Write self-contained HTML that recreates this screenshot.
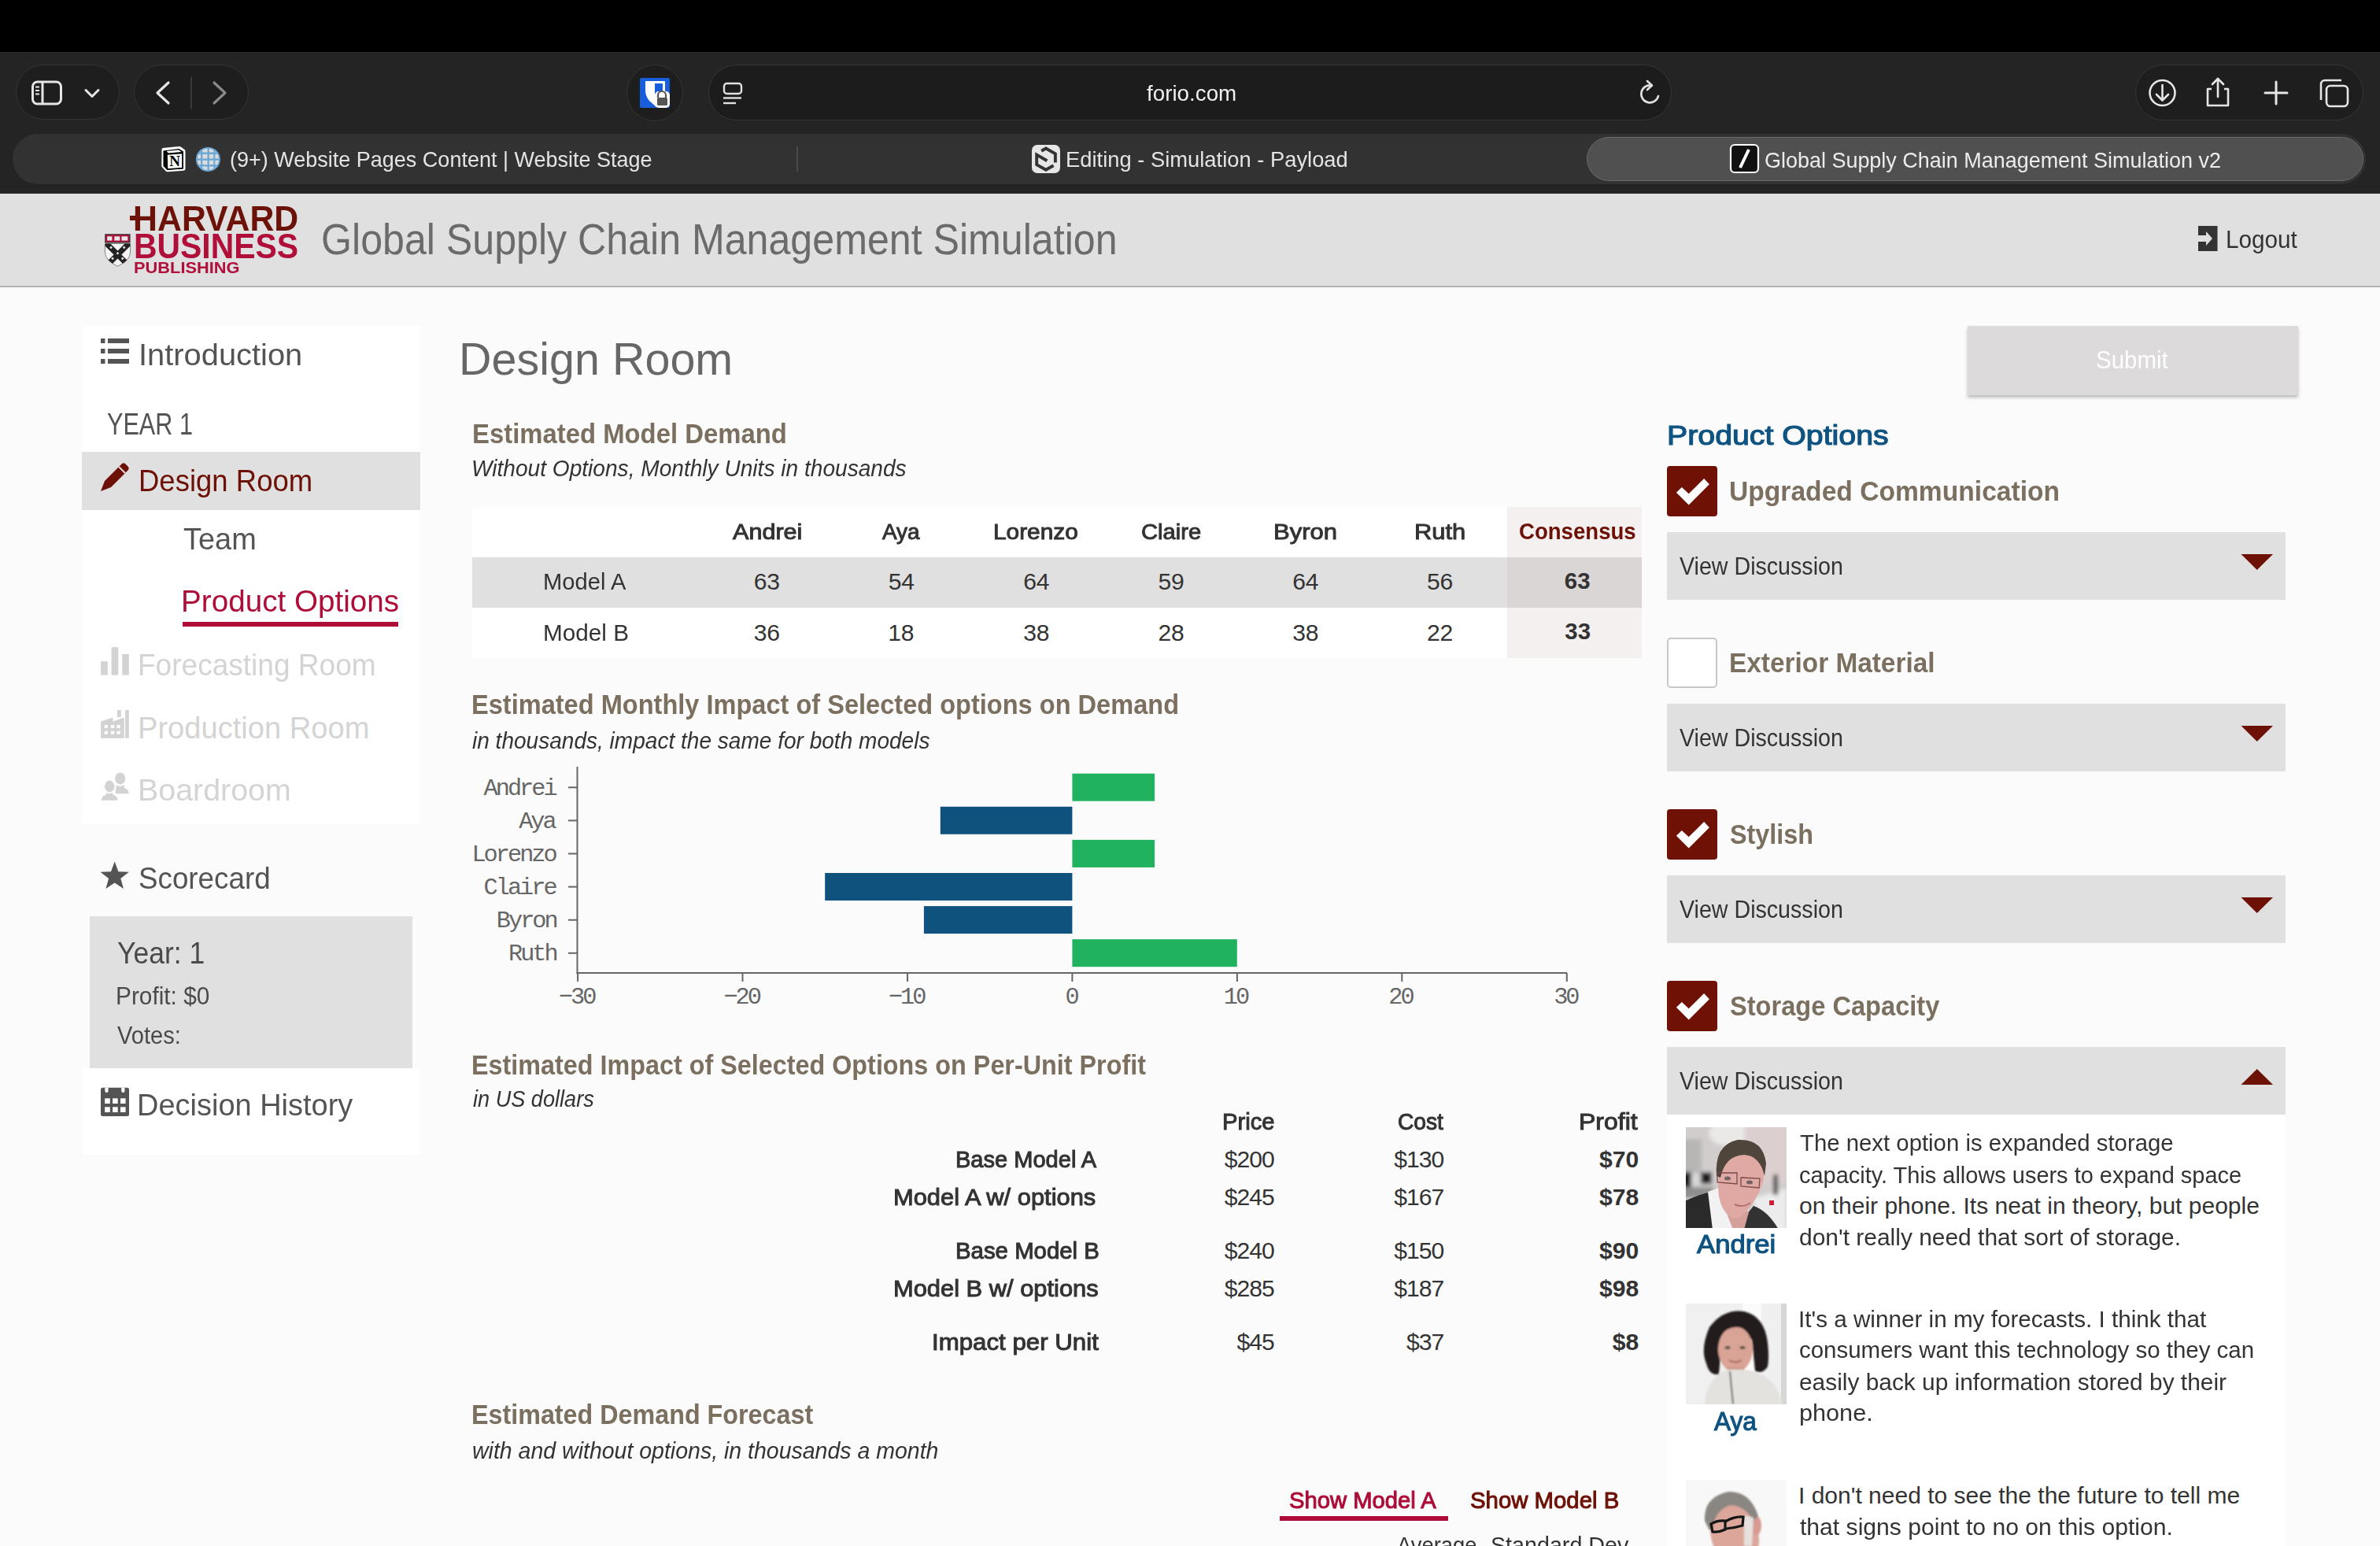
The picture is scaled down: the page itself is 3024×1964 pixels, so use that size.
<!DOCTYPE html>
<html><head><meta charset="utf-8"><title>Design Room</title>
<style>
html,body{margin:0;padding:0;width:3024px;height:1964px;overflow:hidden;background:#fbfbfb;}
body{position:relative;font-family:'Liberation Sans', sans-serif;}
.t{position:absolute;white-space:pre;line-height:1;}
svg{position:absolute;overflow:visible;}
</style></head><body>
<div style="position:absolute;left:0px;top:0px;width:3024px;height:66px;background:#000;"></div>
<div style="position:absolute;left:0px;top:66px;width:3024px;height:180px;background:#242424;"></div>
<div style="position:absolute;left:20px;top:82px;width:132px;height:70px;border-radius:35px;background:#1e1e1e;border:1px solid #353535;box-sizing:border-box"></div>
<svg style="left:0;top:0" width="3024" height="246"><rect x="41.5" y="104" width="36" height="28" rx="6" fill="none" stroke="#e6e6e6" stroke-width="3"/><line x1="54" y1="104" x2="54" y2="132" stroke="#e6e6e6" stroke-width="3"/><line x1="45" y1="110.5" x2="50" y2="110.5" stroke="#e6e6e6" stroke-width="2"/><line x1="45" y1="115" x2="50" y2="115" stroke="#e6e6e6" stroke-width="2"/><line x1="45" y1="119.5" x2="50" y2="119.5" stroke="#e6e6e6" stroke-width="2"/><polyline points="109,114.5 117,122.5 125,114.5" fill="none" stroke="#e6e6e6" stroke-width="3" stroke-linecap="round" stroke-linejoin="round"/></svg>
<div style="position:absolute;left:170px;top:82px;width:146px;height:70px;border-radius:35px;background:#1e1e1e;border:1px solid #353535;box-sizing:border-box"></div>
<svg style="left:0;top:0" width="3024" height="246"><polyline points="214,105 200,118 214,131" fill="none" stroke="#e6e6e6" stroke-width="3.2" stroke-linecap="round" stroke-linejoin="round"/><line x1="243" y1="98" x2="243" y2="138" stroke="#444" stroke-width="1.5"/><polyline points="272,105 286,118 272,131" fill="none" stroke="#8a8a8a" stroke-width="3.2" stroke-linecap="round" stroke-linejoin="round"/></svg>
<div style="position:absolute;left:796px;top:82px;width:72px;height:72px;border-radius:36px;background:#1e1e1e;border:1px solid #353535;box-sizing:border-box"></div>
<svg style="left:0;top:0" width="3024" height="246"><rect x="813" y="99" width="38" height="38" rx="2" fill="#175ddc"/><path d="M820 103 H845 V123 L834 136 L825 128 Q820 122 820 115 Z" fill="#fff"/><rect x="832" y="106" width="10" height="14" fill="#175ddc"/><rect x="832" y="116" width="19" height="21" rx="5" fill="#fff"/><path d="M836 124 v-3 a5 5 0 0 1 10 0 v3" fill="none" stroke="#555" stroke-width="2.2"/><rect x="835" y="124" width="13" height="10" rx="1.5" fill="#555"/></svg>
<div style="position:absolute;left:900px;top:82px;width:1224px;height:71px;border-radius:36px;background:#1c1c1c;border:1px solid #363636;box-sizing:border-box"></div>
<svg style="left:0;top:0" width="3024" height="246"><rect x="920" y="106" width="22" height="13" rx="3.5" fill="none" stroke="#e0e0e0" stroke-width="2.4"/><line x1="919" y1="124.5" x2="942" y2="124.5" stroke="#e0e0e0" stroke-width="2.4"/><line x1="919" y1="131" x2="935" y2="131" stroke="#e0e0e0" stroke-width="2.4"/><path d="M2107 122 A11 11 0 1 1 2098 108.5" fill="none" stroke="#e0e0e0" stroke-width="2.6" stroke-linecap="round"/><polyline points="2093,103 2099,108.5 2093,114" fill="none" stroke="#e0e0e0" stroke-width="2.6" stroke-linecap="round" stroke-linejoin="round"/></svg>
<div style="position:absolute;left:2713px;top:82px;width:290px;height:71px;border-radius:36px;background:#1e1e1e;border:1px solid #353535;box-sizing:border-box"></div>
<svg style="left:0;top:0" width="3024" height="246"><circle cx="2747.5" cy="118" r="16" fill="none" stroke="#e6e6e6" stroke-width="2.6"/><line x1="2747.5" y1="108" x2="2747.5" y2="127" stroke="#e6e6e6" stroke-width="2.6" stroke-linecap="round"/><polyline points="2740,120 2747.5,127.5 2755,120" fill="none" stroke="#e6e6e6" stroke-width="2.6" stroke-linecap="round" stroke-linejoin="round"/><path d="M2810 113 H2805 V134 H2831 V113 H2826" fill="none" stroke="#e6e6e6" stroke-width="2.6" stroke-linejoin="round"/><line x1="2818" y1="100" x2="2818" y2="123" stroke="#e6e6e6" stroke-width="2.6" stroke-linecap="round"/><polyline points="2811,107 2818,100 2825,107" fill="none" stroke="#e6e6e6" stroke-width="2.6" stroke-linecap="round" stroke-linejoin="round"/><line x1="2878" y1="118" x2="2906" y2="118" stroke="#e6e6e6" stroke-width="3" stroke-linecap="round"/><line x1="2892" y1="104" x2="2892" y2="132" stroke="#e6e6e6" stroke-width="3" stroke-linecap="round"/><rect x="2956" y="109" width="27" height="26" rx="5" fill="none" stroke="#e6e6e6" stroke-width="2.6"/><path d="M2949 127 V107 a5 5 0 0 1 5 -5 H2975" fill="none" stroke="#e6e6e6" stroke-width="2.6"/></svg>
<div style="position:absolute;left:16px;top:170px;width:2990px;height:64px;border-radius:32px;background:#323232"></div>
<div style="position:absolute;left:1012px;top:186px;width:2px;height:32px;background:#4a4a4a;"></div>
<div style="position:absolute;left:2016px;top:174px;width:987px;height:56px;border-radius:28px;background:#505050;border:1.5px solid #6a6a6a;box-sizing:border-box"></div>
<svg style="left:0;top:0" width="3024" height="246"><path d="M205.5 190.5 Q205 188.5 207 188 L227.5 186 Q229 186 230.5 187 L235 190.5 Q235.5 191.5 235.5 193 V214.5 Q235.5 216.5 233.5 216.8 L213 218.2 Q211.5 218.3 210.5 217.3 L206 212.5 Q205.3 211.6 205.3 210.5 Z" fill="#fff"/><path d="M207.5 191.5 L227.5 189 L233 192.5 V214.5 L212.5 216 L207.5 211 Z" fill="#000"/><path d="M211.5 192 L227 190.5 L230.5 193 L214 194.5 Z" fill="#fff"/><path d="M212 196 L232 194.5 V213.5 L212.5 215 Z" fill="#fff" stroke="#000" stroke-width="1.6"/><text x="222" y="211.2" text-anchor="middle" font-family="Liberation Serif" font-weight="700" font-size="19" fill="#000">N</text><clipPath id="gc"><circle cx="264.4" cy="202.4" r="13.6"/></clipPath><circle cx="264.4" cy="202.4" r="15.5" fill="#6aa6d6"/><g clip-path="url(#gc)" fill="#dcdcdc"><rect x="250" y="186" width="5" height="7.5"/><rect x="257.3" y="186" width="6.2" height="7.5"/><rect x="265.8" y="186" width="5.5" height="7.5"/><rect x="273.4" y="186" width="6" height="7.5"/><rect x="250" y="196" width="5" height="5.4"/><rect x="257.3" y="196" width="6.2" height="5.4"/><rect x="265.8" y="196" width="5.5" height="5.4"/><rect x="273.4" y="196" width="6" height="5.4"/><rect x="250" y="203.8" width="5" height="5.4"/><rect x="257.3" y="203.8" width="6.2" height="5.4"/><rect x="265.8" y="203.8" width="5.5" height="5.4"/><rect x="273.4" y="203.8" width="6" height="5.4"/><rect x="250" y="211.5" width="5" height="8"/><rect x="257.3" y="211.5" width="6.2" height="8"/><rect x="265.8" y="211.5" width="5.5" height="8"/><rect x="273.4" y="211.5" width="6" height="8"/></g><rect x="1311" y="184" width="36" height="36" rx="7" fill="#e6e6e6"/><path d="M1330.4 204.3 L1317.2 196.6 V209.1 L1328.9 215.8 L1338.6 210.2" fill="none" stroke="#333" stroke-width="3.9" stroke-linejoin="miter"/><path d="M1323.2 191.8 L1328.9 188.5 L1340.9 195.4 V206.6" fill="none" stroke="#333" stroke-width="3.9" stroke-linejoin="miter"/><rect x="2199" y="184" width="35" height="35" rx="5" fill="#111" stroke="#fff" stroke-width="2.2"/><line x1="2222" y1="190" x2="2211" y2="213" stroke="#fff" stroke-width="4"/></svg>
<div style="position:absolute;left:0px;top:246px;width:3024px;height:117px;background:#e0e0e0;"></div>
<div style="position:absolute;left:0px;top:363px;width:3024px;height:2px;background:#b5b5b5;"></div>
<div style="position:absolute;left:165px;top:274.4px;width:10px;height:5.900000000000034px;background:#6d1208;"></div>
<svg style="left:0;top:0" width="400" height="400"><rect x="133.2" y="297.2" width="32.4" height="11.4" fill="#3a3a3a"/><rect x="134.4" y="298.4" width="30" height="9" fill="#b00f3a"/><rect x="136.2" y="300.3" width="6.2" height="5.3" fill="#e8e8e8"/><rect x="145.3" y="300.3" width="7" height="5.3" fill="#e8e8e8"/><rect x="154.5" y="300.3" width="7.8" height="5.3" fill="#e8e8e8"/><path d="M133.4 309.5 H165.6 V320 Q165.6 331 149.5 338.3 Q133.4 331 133.4 320 Z" fill="#f4f4f4" stroke="#555" stroke-width="0.7"/><clipPath id="shc"><path d="M133.4 309.5 H165.6 V320 Q165.6 331 149.5 338.3 Q133.4 331 133.4 320 Z"/></clipPath><path d="M135 309 L162 336 M164 309 L137 336" stroke="#222" stroke-width="7" clip-path="url(#shc)"/><g fill="#e6e6e6"><rect x="140" y="313" width="2.6" height="2.6" transform="rotate(45 141.1 314.1)"/><rect x="156.6" y="313" width="2.6" height="2.6" transform="rotate(45 157.7 314.1)"/><rect x="148.4" y="320.4" width="2.6" height="2.6" transform="rotate(45 149.5 321.5)"/><rect x="142" y="327" width="2.6" height="2.6" transform="rotate(45 143.1 328.1)"/><rect x="154.6" y="327" width="2.6" height="2.6" transform="rotate(45 155.7 328.1)"/></g></svg>
<svg style="left:0;top:0" width="3024" height="400"><rect x="2793" y="287" width="24.5" height="32" fill="#333"/><path d="M2793 299 H2803 V294 L2811 303 L2803 312 V307 H2793 Z" fill="#e0e0e0"/></svg>
<div style="position:absolute;left:104px;top:414px;width:430px;height:633px;background:#fff;"></div>
<div style="position:absolute;left:104px;top:574px;width:430px;height:74px;background:#e0e0e0;"></div>
<div style="position:absolute;left:104px;top:1357px;width:430px;height:110px;background:#fff;"></div>
<div style="position:absolute;left:114px;top:1164px;width:410px;height:193px;background:#e0e0e0;"></div>
<svg style="left:0;top:0" width="600" height="1500"><rect x="128" y="430" width="5.5" height="6" fill="#545454"/><rect x="137" y="430" width="27" height="6" fill="#545454"/><rect x="128" y="443" width="5.5" height="6" fill="#545454"/><rect x="137" y="443" width="27" height="6" fill="#545454"/><rect x="128" y="456" width="5.5" height="6" fill="#545454"/><rect x="137" y="456" width="27" height="6" fill="#545454"/><path d="M128 624 L133 611 L155 589 Q157 587.5 159 589 L163 593 Q164.5 595 163 597 L141 619 Z" fill="#6d1006"/><line x1="151" y1="593" x2="159" y2="601" stroke="#e0e0e0" stroke-width="2"/><rect x="128.1" y="840.1" width="8.7" height="17.5" fill="#d3d3d3"/><rect x="141.6" y="822.1" width="8.7" height="35.5" fill="#d3d3d3"/><rect x="155.3" y="831" width="8.5" height="26.6" fill="#d3d3d3"/><path d="M128 937.7 V916.6 L143.5 911.5 V916.6 L157.7 911.5 V937.7 Z" fill="#d3d3d3"/><rect x="148.9" y="902" width="4.9" height="9" fill="#d3d3d3"/><rect x="159.1" y="902" width="4.7" height="35.7" fill="#d3d3d3"/><g fill="#fff"><rect x="132.8" y="921" width="4.2" height="4"/><rect x="140.9" y="921" width="4.3" height="4"/><rect x="148.4" y="921" width="4.3" height="4"/><rect x="132.8" y="928.7" width="4.2" height="4"/><rect x="140.9" y="928.7" width="4.3" height="4"/><rect x="148.4" y="928.7" width="4.3" height="4"/></g><ellipse cx="152.7" cy="989" rx="6.6" ry="7.6" fill="#d3d3d3"/><path d="M146.3 1008.3 L148 997 Q152.7 1001 157.5 997 L158 1001 Q163.8 1003 163.8 1008.3 Z" fill="#d3d3d3"/><ellipse cx="139.2" cy="999" rx="7" ry="8.2" fill="#d3d3d3" stroke="#fff" stroke-width="1.5"/><path d="M128 1017.6 Q128 1011 134 1009 L135.5 1006 Q139.2 1009 143 1006 L144.5 1009 Q150.6 1011 150.6 1017.6 Z" fill="#d3d3d3" stroke="#fff" stroke-width="1.5"/><path d="M145.7 1094.6 L150.4 1107.2 L163.9 1107.7 L153.3 1116 L157 1129 L145.7 1121.5 L134.4 1129 L138.1 1116 L127.5 1107.7 L141 1107.2 Z" fill="#545454"/><rect x="128" y="1381.7" width="36" height="36.3" rx="2.5" fill="#545454"/><path d="M133.4 1381.7 V1386 a2.1 2.1 0 0 0 4.2 0 V1381.7 Z M154.3 1381.7 V1386 a2.1 2.1 0 0 0 4.2 0 V1381.7 Z" fill="#fff"/><rect x="133.2" y="1395.3" width="6.6" height="6.7" fill="#fff"/><rect x="143.1" y="1395.3" width="6.6" height="6.7" fill="#fff"/><rect x="153.0" y="1395.3" width="6.6" height="6.7" fill="#fff"/><rect x="133.2" y="1406.3" width="6.6" height="6.7" fill="#fff"/><rect x="143.1" y="1406.3" width="6.6" height="6.7" fill="#fff"/><rect x="153.0" y="1406.3" width="6.6" height="6.7" fill="#fff"/></svg>
<div style="position:absolute;left:232px;top:790px;width:274px;height:6px;background:#ad0d38;"></div>
<div style="position:absolute;left:600px;top:644px;width:1486px;height:192px;background:#fff;"></div>
<div style="position:absolute;left:600px;top:708px;width:1486px;height:64px;background:#e0e0e0;"></div>
<div style="position:absolute;left:1915px;top:644px;width:171px;height:64px;background:#f3f0ef;"></div>
<div style="position:absolute;left:1915px;top:708px;width:171px;height:64px;background:#d9d6d5;"></div>
<div style="position:absolute;left:1915px;top:772px;width:171px;height:64px;background:#f3f0ef;"></div>
<svg style="left:0;top:0" width="2100" height="1300"><line x1="733.5" y1="974" x2="733.5" y2="1237" stroke="#666" stroke-width="2"/><line x1="732.5" y1="1236" x2="1991" y2="1236" stroke="#666" stroke-width="2"/><line x1="734.1" y1="1236" x2="734.1" y2="1247" stroke="#666" stroke-width="2"/><line x1="943.5" y1="1236" x2="943.5" y2="1247" stroke="#666" stroke-width="2"/><line x1="1153.0" y1="1236" x2="1153.0" y2="1247" stroke="#666" stroke-width="2"/><line x1="1362.4" y1="1236" x2="1362.4" y2="1247" stroke="#666" stroke-width="2"/><line x1="1571.9" y1="1236" x2="1571.9" y2="1247" stroke="#666" stroke-width="2"/><line x1="1781.3" y1="1236" x2="1781.3" y2="1247" stroke="#666" stroke-width="2"/><line x1="1990.8" y1="1236" x2="1990.8" y2="1247" stroke="#666" stroke-width="2"/><line x1="722" y1="1000.3" x2="734" y2="1000.3" stroke="#666" stroke-width="2"/><rect x="1362.4" y="982.7" width="104.7" height="35" fill="#21b25f"/><line x1="722" y1="1042.4" x2="734" y2="1042.4" stroke="#666" stroke-width="2"/><rect x="1194.8" y="1024.8" width="167.6" height="35" fill="#0f527e"/><line x1="722" y1="1084.5" x2="734" y2="1084.5" stroke="#666" stroke-width="2"/><rect x="1362.4" y="1066.9" width="104.7" height="35" fill="#21b25f"/><line x1="722" y1="1126.6" x2="734" y2="1126.6" stroke="#666" stroke-width="2"/><rect x="1048.2" y="1109.0" width="314.2" height="35" fill="#0f527e"/><line x1="722" y1="1168.7" x2="734" y2="1168.7" stroke="#666" stroke-width="2"/><rect x="1173.9" y="1151.1" width="188.5" height="35" fill="#0f527e"/><line x1="722" y1="1210.8" x2="734" y2="1210.8" stroke="#666" stroke-width="2"/><rect x="1362.4" y="1193.2" width="209.4" height="35" fill="#21b25f"/></svg>
<div style="position:absolute;left:1626px;top:1926px;width:214px;height:6px;background:#ad0d38;"></div>
<div style="position:absolute;left:2500px;top:414px;width:420px;height:88px;background:#dcdada;box-shadow:0 3px 4px rgba(0,0,0,0.25)"></div>
<div style="position:absolute;left:2118px;top:592px;width:64px;height:64px;border-radius:4px;background:#701106"></div>
<svg style="left:2118px;top:592px" width="64" height="64"><polygon points="11.9,33.7 18.9,26.9 27.7,35.2 47.1,16.1 53.9,23.3 27.7,49.5" fill="#fff"/></svg>
<div style="position:absolute;left:2118px;top:676px;width:786px;height:86px;background:#e0e0e0;"></div>
<svg style="left:0;top:0" width="3024" height="1964"><polygon points="2847.5,704 2888,704 2867.75,724" fill="#6d1006"/></svg>
<div style="position:absolute;left:2118px;top:810px;width:64px;height:64px;border-radius:5px;background:#fff;border:2px solid #c8c8c8;box-sizing:border-box"></div>
<div style="position:absolute;left:2118px;top:894px;width:786px;height:86px;background:#e0e0e0;"></div>
<svg style="left:0;top:0" width="3024" height="1964"><polygon points="2847.5,922 2888,922 2867.75,942" fill="#6d1006"/></svg>
<div style="position:absolute;left:2118px;top:1028px;width:64px;height:64px;border-radius:4px;background:#701106"></div>
<svg style="left:2118px;top:1028px" width="64" height="64"><polygon points="11.9,33.7 18.9,26.9 27.7,35.2 47.1,16.1 53.9,23.3 27.7,49.5" fill="#fff"/></svg>
<div style="position:absolute;left:2118px;top:1112px;width:786px;height:86px;background:#e0e0e0;"></div>
<svg style="left:0;top:0" width="3024" height="1964"><polygon points="2847.5,1140 2888,1140 2867.75,1160" fill="#6d1006"/></svg>
<div style="position:absolute;left:2118px;top:1246px;width:64px;height:64px;border-radius:4px;background:#701106"></div>
<svg style="left:2118px;top:1246px" width="64" height="64"><polygon points="11.9,33.7 18.9,26.9 27.7,35.2 47.1,16.1 53.9,23.3 27.7,49.5" fill="#fff"/></svg>
<div style="position:absolute;left:2118px;top:1330px;width:786px;height:86px;background:#e0e0e0;"></div>
<svg style="left:0;top:0" width="3024" height="1964"><polygon points="2847.5,1378 2888,1378 2867.75,1358" fill="#6d1006"/></svg>
<div style="position:absolute;left:2118px;top:1416px;width:786px;height:548px;background:#fff;"></div>
<div style="position:absolute;left:2142px;top:1432px;width:128px;height:128px;overflow:hidden;background:#d5d0d0"><svg style="left:0;top:0" width="128" height="128"><defs><filter id="b1" x="-20%" y="-20%" width="140%" height="140%"><feGaussianBlur stdDeviation="2.5"/></filter><filter id="b0"><feGaussianBlur stdDeviation="0.7"/></filter></defs><g filter="url(#b1)"><rect x="-10" y="-10" width="150" height="150" fill="#d2cdcd"/><rect x="-10" y="15" width="30" height="45" fill="#b8b5b5"/><ellipse cx="55" cy="8" rx="26" ry="16" fill="#ebe8e8"/><rect x="75" y="-10" width="60" height="80" fill="#dccfcf"/><rect x="-5" y="57" width="12" height="20" fill="#151515"/><rect x="8" y="58" width="10" height="16" fill="#d8d8d8"/><rect x="19" y="57" width="14" height="15" fill="#1d1d1d"/><rect x="-5" y="76" width="40" height="14" fill="#8e8e8e"/><path d="M86 90 L128 78 V135 H92 Z" fill="#ececec"/><rect x="111" y="60" width="6" height="26" fill="#444"/></g><rect x="106" y="93" width="6" height="6" fill="#c8203a" filter="url(#b0)"/><g filter="url(#b0)"><path d="M-2 94 Q20 84 40 80 L52 130 H-2 Z" fill="#2a2a2a"/><path d="M28 82 L42 77 L66 130 H34 Z" fill="#f2f2f2"/><path d="M62 130 L86 100 Q104 106 118 130 Z" fill="#333"/><path d="M42 84 L60 130 H74 L80 108 Z" fill="#d6a09a"/><path d="M42 60 Q38 95 52 110 Q62 120 72 112 Q92 92 99 66 L99 48 Q86 28 68 30 Q46 32 42 52 Z" fill="#e0a9a3"/><path d="M39 62 Q36 22 66 16 Q98 14 102 46 L100 62 Q94 36 74 35 Q50 36 44 64 Z" fill="#50453b"/><path d="M40 58 L65 58 L65 72 L40 70 Z M70 64 L94 65 L93 77 L70 75 Z" fill="none" stroke="#7a4848" stroke-width="1.3"/><ellipse cx="53" cy="65" rx="4" ry="2.5" fill="#706262"/><ellipse cx="81" cy="70" rx="4" ry="2.5" fill="#706262"/><path d="M62 98 Q72 103 82 96" fill="none" stroke="#b27070" stroke-width="2"/></g></svg></div>
<div style="position:absolute;left:2142px;top:1656px;width:128px;height:128px;overflow:hidden;background:#f0f0f0"><svg style="left:0;top:0" width="128" height="128"><defs><filter id="b2"><feGaussianBlur stdDeviation="1"/></filter></defs><rect x="72" y="0" width="24" height="128" fill="#fbfbfb"/><rect x="121" y="0" width="7" height="128" fill="#d6d6d6"/><g filter="url(#b2)"><path d="M26 76 Q18 58 30 30 Q48 6 74 10 Q100 16 104 50 Q106 68 104 80 Q98 90 88 86 L84 46 Q64 32 46 44 L42 90 Q30 92 26 76 Z" fill="#201b1a"/><ellipse cx="63" cy="58" rx="22" ry="29" fill="#d9a395"/><path d="M42 42 Q60 20 86 38 L86 28 Q60 8 40 30 Z" fill="#201b1a"/><path d="M52 80 L74 80 L76 96 L52 96 Z" fill="#d29c8e"/><path d="M24 130 Q26 94 52 84 L78 84 Q118 92 122 130 Z" fill="#e4e2df"/><path d="M56 86 L60 128" stroke="#666" stroke-width="2"/><ellipse cx="53" cy="56" rx="3.5" ry="2" fill="#554"/><ellipse cx="72" cy="56" rx="3.5" ry="2" fill="#554"/><path d="M55 72 Q63 77 71 72" fill="none" stroke="#a0605a" stroke-width="2"/></g></svg></div>
<div style="position:absolute;left:2142px;top:1880px;width:128px;height:128px;overflow:hidden;background:#f8f8f8"><svg style="left:0;top:0" width="128" height="128"><defs><filter id="b3"><feGaussianBlur stdDeviation="1"/></filter></defs><g filter="url(#b3)"><ellipse cx="62" cy="70" rx="30" ry="40" transform="rotate(-18 62 70)" fill="#dca69a"/><ellipse cx="90" cy="58" rx="6" ry="12" fill="#d99a92"/><path d="M24 52 Q22 22 54 15 Q82 14 92 46 L86 52 Q76 34 58 32 Q38 36 34 62 L30 64 Z" fill="#8a8682"/><path d="M74 45 L86 48 L84 84 L74 84 Z" fill="#e6e0de"/></g><path d="M32 56 Q40 51 50 52 L50 63 Q42 67 34 66 Z" fill="none" stroke="#151515" stroke-width="3.2"/><path d="M50 53 Q62 46 73 47 L72 58 Q62 61 51 62" fill="none" stroke="#151515" stroke-width="3.2"/></svg></div>
<div class="t" style="left:1456.50px;top:104.54px;font-size:28.00px;color:#f0f0f0;transform:scaleX(0.9919);transform-origin:0 0;">forio.com</div>
<div class="t" style="left:292.32px;top:188.76px;font-size:27.50px;color:#e4e4e4;transform:scaleX(0.9818);transform-origin:0 0;">(9+) Website Pages Content | Website Stage</div>
<div class="t" style="left:1354.31px;top:188.76px;font-size:27.50px;color:#e4e4e4;transform:scaleX(0.9946);transform-origin:0 0;">Editing - Simulation - Payload</div>
<div class="t" style="left:2242.02px;top:189.56px;font-size:27.50px;color:#ececec;transform:scaleX(0.9802);transform-origin:0 0;">Global Supply Chain Management Simulation v2</div>
<div class="t" style="left:169.47px;top:256.30px;font-size:44.49px;color:#6d1208;font-weight:700;transform:scaleX(0.9633);transform-origin:0 0;">HARVARD</div>
<div class="t" style="left:169.56px;top:291.00px;font-size:44.49px;color:#b00f3a;font-weight:700;transform:scaleX(0.9189);transform-origin:0 0;">BUSINESS</div>
<div class="t" style="left:170.34px;top:329.61px;font-size:20.58px;color:#b00f3a;font-weight:700;transform:scaleX(1.0600);transform-origin:0 0;">PUBLISHING</div>
<div class="t" style="left:407.90px;top:276.77px;font-size:55.65px;color:#6b6b6b;transform:scaleX(0.9010);transform-origin:0 0;">Global Supply Chain Management Simulation</div>
<div class="t" style="left:2828.05px;top:288.68px;font-size:30.43px;color:#333;transform:scaleX(0.9760);transform-origin:0 0;">Logout</div>
<div class="t" style="left:175.86px;top:431.89px;font-size:38.12px;color:#545454;transform:scaleX(1.0456);transform-origin:0 0;">Introduction</div>
<div class="t" style="left:135.90px;top:519.67px;font-size:38.26px;color:#545454;transform:scaleX(0.8005);transform-origin:0 0;">YEAR 1</div>
<div class="t" style="left:176.43px;top:591.99px;font-size:38.12px;color:#6d1006;transform:scaleX(0.9583);transform-origin:0 0;">Design Room</div>
<div class="t" style="left:232.60px;top:665.79px;font-size:38.12px;color:#545454;transform:scaleX(0.9951);transform-origin:0 0;">Team</div>
<div class="t" style="left:229.56px;top:745.39px;font-size:38.12px;color:#ad0d38;transform:scaleX(1.0141);transform-origin:0 0;">Product Options</div>
<div class="t" style="left:175.08px;top:826.29px;font-size:38.12px;color:#d4d4d4;transform:scaleX(0.9719);transform-origin:0 0;">Forecasting Room</div>
<div class="t" style="left:175.00px;top:906.29px;font-size:38.12px;color:#d4d4d4;">Production Room</div>
<div class="t" style="left:174.90px;top:985.39px;font-size:38.12px;color:#d4d4d4;transform:scaleX(1.0333);transform-origin:0 0;">Boardroom</div>
<div class="t" style="left:176.04px;top:1097.49px;font-size:38.12px;color:#545454;transform:scaleX(0.9648);transform-origin:0 0;">Scorecard</div>
<div class="t" style="left:148.50px;top:1191.85px;font-size:38.41px;color:#4a4a4a;transform:scaleX(0.9243);transform-origin:0 0;">Year: 1</div>
<div class="t" style="left:146.54px;top:1250.48px;font-size:30.43px;color:#4a4a4a;transform:scaleX(0.9804);transform-origin:0 0;">Profit: $0</div>
<div class="t" style="left:148.50px;top:1299.68px;font-size:30.43px;color:#4a4a4a;transform:scaleX(0.9560);transform-origin:0 0;">Votes:</div>
<div class="t" style="left:174.01px;top:1385.49px;font-size:38.12px;color:#545454;transform:scaleX(0.9965);transform-origin:0 0;">Decision History</div>
<div class="t" style="left:583.05px;top:426.77px;font-size:58.26px;color:#676767;transform:scaleX(0.9868);transform-origin:0 0;">Design Room</div>
<div class="t" style="left:599.53px;top:532.54px;font-size:35.22px;color:#7b6f5f;font-weight:700;transform:scaleX(0.9330);transform-origin:0 0;">Estimated Model Demand</div>
<div class="t" style="left:599.13px;top:580.33px;font-size:30.14px;color:#333;font-style:italic;transform:scaleX(0.9327);transform-origin:0 0;">Without Options, Monthly Units in thousands</div>
<div class="t" style="left:931.13px;top:662.05px;font-size:28.00px;color:#333;-webkit-text-stroke:0.98px #333;transform:scaleX(1.0916);transform-origin:0 0;">Andrei</div>
<div class="t" style="left:1121.49px;top:662.05px;font-size:28.00px;color:#333;-webkit-text-stroke:0.98px #333;transform:scaleX(0.9969);transform-origin:0 0;">Aya</div>
<div class="t" style="left:1262.39px;top:662.05px;font-size:28.00px;color:#333;-webkit-text-stroke:0.98px #333;transform:scaleX(1.0650);transform-origin:0 0;">Lorenzo</div>
<div class="t" style="left:1449.97px;top:662.05px;font-size:28.00px;color:#333;-webkit-text-stroke:0.98px #333;transform:scaleX(1.0414);transform-origin:0 0;">Claire</div>
<div class="t" style="left:1618.33px;top:662.05px;font-size:28.00px;color:#333;-webkit-text-stroke:0.98px #333;transform:scaleX(1.1071);transform-origin:0 0;">Byron</div>
<div class="t" style="left:1796.83px;top:662.05px;font-size:28.00px;color:#333;-webkit-text-stroke:0.98px #333;transform:scaleX(1.1034);transform-origin:0 0;">Ruth</div>
<div class="t" style="left:1930.06px;top:659.84px;font-size:29.42px;color:#6d1006;font-weight:700;transform:scaleX(0.9380);transform-origin:0 0;">Consensus</div>
<div class="t" style="left:690.06px;top:724.33px;font-size:30.14px;color:#333;transform:scaleX(0.9678);transform-origin:0 0;">Model A</div>
<div class="t" style="left:690.03px;top:788.73px;font-size:30.14px;color:#333;transform:scaleX(0.9859);transform-origin:0 0;">Model B</div>
<div class="t" style="left:957.87px;top:724.33px;font-size:30.14px;color:#333;letter-spacing:-0.300px;">63</div>
<div class="t" style="left:957.87px;top:788.73px;font-size:30.14px;color:#333;letter-spacing:-0.300px;">36</div>
<div class="t" style="left:1128.77px;top:724.33px;font-size:30.14px;color:#333;letter-spacing:-0.300px;">54</div>
<div class="t" style="left:1128.27px;top:788.73px;font-size:30.14px;color:#333;letter-spacing:-0.300px;">18</div>
<div class="t" style="left:1300.27px;top:724.33px;font-size:30.14px;color:#333;letter-spacing:-0.300px;">64</div>
<div class="t" style="left:1300.27px;top:788.73px;font-size:30.14px;color:#333;letter-spacing:-0.300px;">38</div>
<div class="t" style="left:1471.47px;top:724.33px;font-size:30.14px;color:#333;letter-spacing:-0.300px;">59</div>
<div class="t" style="left:1471.47px;top:788.73px;font-size:30.14px;color:#333;letter-spacing:-0.300px;">28</div>
<div class="t" style="left:1642.27px;top:724.33px;font-size:30.14px;color:#333;letter-spacing:-0.300px;">64</div>
<div class="t" style="left:1642.27px;top:788.73px;font-size:30.14px;color:#333;letter-spacing:-0.300px;">38</div>
<div class="t" style="left:1812.97px;top:724.33px;font-size:30.14px;color:#333;letter-spacing:-0.300px;">56</div>
<div class="t" style="left:1812.97px;top:788.73px;font-size:30.14px;color:#333;letter-spacing:-0.300px;">22</div>
<div class="t" style="left:1987.82px;top:722.94px;font-size:29.42px;color:#333;font-weight:700;">63</div>
<div class="t" style="left:1988.32px;top:786.74px;font-size:29.42px;color:#333;font-weight:700;">33</div>
<div class="t" style="left:598.75px;top:877.24px;font-size:35.22px;color:#7b6f5f;font-weight:700;transform:scaleX(0.9244);transform-origin:0 0;">Estimated Monthly Impact of Selected options on Demand</div>
<div class="t" style="left:600.00px;top:925.53px;font-size:30.14px;color:#333;font-style:italic;transform:scaleX(0.9309);transform-origin:0 0;">in thousands, impact the same for both models</div>
<div class="t" style="left:614.59px;top:986.62px;font-size:30.30px;color:#666;font-family:'Liberation Mono', monospace;letter-spacing:-3.000px;">Andrei</div>
<div class="t" style="left:659.14px;top:1028.72px;font-size:30.30px;color:#666;font-family:'Liberation Mono', monospace;letter-spacing:-3.000px;">Aya</div>
<div class="t" style="left:599.41px;top:1070.82px;font-size:30.30px;color:#666;font-family:'Liberation Mono', monospace;letter-spacing:-3.000px;">Lorenzo</div>
<div class="t" style="left:614.59px;top:1112.92px;font-size:30.30px;color:#666;font-family:'Liberation Mono', monospace;letter-spacing:-3.000px;">Claire</div>
<div class="t" style="left:630.78px;top:1155.02px;font-size:30.30px;color:#666;font-family:'Liberation Mono', monospace;letter-spacing:-3.000px;">Byron</div>
<div class="t" style="left:645.96px;top:1197.12px;font-size:30.30px;color:#666;font-family:'Liberation Mono', monospace;letter-spacing:-3.000px;">Ruth</div>
<div class="t" style="left:709.87px;top:1252.32px;font-size:30.30px;color:#666;font-family:'Liberation Mono', monospace;letter-spacing:-3.000px;">−30</div>
<div class="t" style="left:919.32px;top:1252.32px;font-size:30.30px;color:#666;font-family:'Liberation Mono', monospace;letter-spacing:-3.000px;">−20</div>
<div class="t" style="left:1128.77px;top:1252.32px;font-size:30.30px;color:#666;font-family:'Liberation Mono', monospace;letter-spacing:-3.000px;">−10</div>
<div class="t" style="left:1353.40px;top:1252.32px;font-size:30.30px;color:#666;font-family:'Liberation Mono', monospace;letter-spacing:-3.000px;">0</div>
<div class="t" style="left:1554.76px;top:1252.32px;font-size:30.30px;color:#666;font-family:'Liberation Mono', monospace;letter-spacing:-3.000px;">10</div>
<div class="t" style="left:1764.21px;top:1252.32px;font-size:30.30px;color:#666;font-family:'Liberation Mono', monospace;letter-spacing:-3.000px;">20</div>
<div class="t" style="left:1974.16px;top:1252.32px;font-size:30.30px;color:#666;font-family:'Liberation Mono', monospace;letter-spacing:-3.000px;">30</div>
<div class="t" style="left:599.16px;top:1335.04px;font-size:35.22px;color:#7b6f5f;font-weight:700;transform:scaleX(0.9181);transform-origin:0 0;">Estimated Impact of Selected Options on Per-Unit Profit</div>
<div class="t" style="left:601.00px;top:1381.03px;font-size:30.14px;color:#333;font-style:italic;transform:scaleX(0.9003);transform-origin:0 0;">in US dollars</div>
<div class="t" style="left:1552.87px;top:1411.16px;font-size:28.69px;color:#333;-webkit-text-stroke:1.00px #333;transform:scaleX(1.0195);transform-origin:0 0;">Price</div>
<div class="t" style="left:1776.01px;top:1411.16px;font-size:28.69px;color:#333;-webkit-text-stroke:1.00px #333;transform:scaleX(0.9812);transform-origin:0 0;">Cost</div>
<div class="t" style="left:2006.33px;top:1411.16px;font-size:28.69px;color:#333;-webkit-text-stroke:1.00px #333;transform:scaleX(1.1161);transform-origin:0 0;">Profit</div>
<div class="t" style="left:1213.88px;top:1458.86px;font-size:28.69px;color:#333;-webkit-text-stroke:1.00px #333;transform:scaleX(1.0125);transform-origin:0 0;">Base Model A</div>
<div class="t" style="left:1555.74px;top:1458.13px;font-size:30.14px;color:#333;letter-spacing:-1.000px;">$200</div>
<div class="t" style="left:1771.14px;top:1458.13px;font-size:30.14px;color:#333;letter-spacing:-1.000px;">$130</div>
<div class="t" style="left:2031.99px;top:1458.13px;font-size:30.14px;color:#333;font-weight:700;">$70</div>
<div class="t" style="left:1135.39px;top:1506.86px;font-size:28.69px;color:#333;-webkit-text-stroke:1.00px #333;transform:scaleX(1.0754);transform-origin:0 0;">Model A w/ options</div>
<div class="t" style="left:1555.74px;top:1506.13px;font-size:30.14px;color:#333;letter-spacing:-1.000px;">$245</div>
<div class="t" style="left:1771.14px;top:1506.13px;font-size:30.14px;color:#333;letter-spacing:-1.000px;">$167</div>
<div class="t" style="left:2031.99px;top:1506.13px;font-size:30.14px;color:#333;font-weight:700;">$78</div>
<div class="t" style="left:1213.87px;top:1574.86px;font-size:28.69px;color:#333;-webkit-text-stroke:1.00px #333;transform:scaleX(1.0241);transform-origin:0 0;">Base Model B</div>
<div class="t" style="left:1555.74px;top:1574.13px;font-size:30.14px;color:#333;letter-spacing:-1.000px;">$240</div>
<div class="t" style="left:1771.14px;top:1574.13px;font-size:30.14px;color:#333;letter-spacing:-1.000px;">$150</div>
<div class="t" style="left:2031.99px;top:1574.13px;font-size:30.14px;color:#333;font-weight:700;">$90</div>
<div class="t" style="left:1135.39px;top:1623.06px;font-size:28.69px;color:#333;-webkit-text-stroke:1.00px #333;transform:scaleX(1.0754);transform-origin:0 0;">Model B w/ options</div>
<div class="t" style="left:1555.74px;top:1622.33px;font-size:30.14px;color:#333;letter-spacing:-1.000px;">$285</div>
<div class="t" style="left:1771.14px;top:1622.33px;font-size:30.14px;color:#333;letter-spacing:-1.000px;">$187</div>
<div class="t" style="left:2031.99px;top:1622.33px;font-size:30.14px;color:#333;font-weight:700;">$98</div>
<div class="t" style="left:1183.77px;top:1690.76px;font-size:28.69px;color:#333;-webkit-text-stroke:1.00px #333;transform:scaleX(1.0892);transform-origin:0 0;">Impact per Unit</div>
<div class="t" style="left:1571.49px;top:1690.03px;font-size:30.14px;color:#333;letter-spacing:-1.000px;">$45</div>
<div class="t" style="left:1786.89px;top:1690.03px;font-size:30.14px;color:#333;letter-spacing:-1.000px;">$37</div>
<div class="t" style="left:2048.75px;top:1690.03px;font-size:30.14px;color:#333;font-weight:700;">$8</div>
<div class="t" style="left:599.17px;top:1778.54px;font-size:35.22px;color:#7b6f5f;font-weight:700;transform:scaleX(0.9167);transform-origin:0 0;">Estimated Demand Forecast</div>
<div class="t" style="left:600.05px;top:1827.53px;font-size:30.14px;color:#333;font-style:italic;transform:scaleX(0.9459);transform-origin:0 0;">with and without options, in thousands a month</div>
<div class="t" style="left:1637.99px;top:1891.56px;font-size:28.69px;color:#ad0d38;-webkit-text-stroke:1.00px #ad0d38;transform:scaleX(1.0187);transform-origin:0 0;">Show Model A</div>
<div class="t" style="left:1868.49px;top:1891.56px;font-size:28.69px;color:#6d1006;-webkit-text-stroke:1.00px #6d1006;transform:scaleX(1.0233);transform-origin:0 0;">Show Model B</div>
<div class="t" style="left:1775.40px;top:1947.53px;font-size:30.14px;color:#333;transform:scaleX(0.9098);transform-origin:0 0;">Average</div>
<div class="t" style="left:1894.25px;top:1947.53px;font-size:30.14px;color:#333;transform:scaleX(0.9517);transform-origin:0 0;">Standard Dev</div>
<div class="t" style="left:2663.03px;top:442.48px;font-size:30.43px;color:#fff;transform:scaleX(0.9689);transform-origin:0 0;">Submit</div>
<div class="t" style="left:2118.07px;top:535.83px;font-size:35.45px;color:#0e5381;-webkit-text-stroke:1.24px #0e5381;transform:scaleX(1.1085);transform-origin:0 0;">Product Options</div>
<div class="t" style="left:2197.07px;top:606.61px;font-size:34.78px;color:#7b6f5f;font-weight:700;transform:scaleX(0.9667);transform-origin:0 0;">Upgraded Communication</div>
<div class="t" style="left:2134.00px;top:704.37px;font-size:31.16px;color:#333;transform:scaleX(0.9185);transform-origin:0 0;">View Discussion</div>
<div class="t" style="left:2197.08px;top:824.61px;font-size:34.78px;color:#7b6f5f;font-weight:700;transform:scaleX(0.9599);transform-origin:0 0;">Exterior Material</div>
<div class="t" style="left:2134.00px;top:922.37px;font-size:31.16px;color:#333;transform:scaleX(0.9185);transform-origin:0 0;">View Discussion</div>
<div class="t" style="left:2198.07px;top:1042.61px;font-size:34.78px;color:#7b6f5f;font-weight:700;transform:scaleX(0.9306);transform-origin:0 0;">Stylish</div>
<div class="t" style="left:2134.00px;top:1140.37px;font-size:31.16px;color:#333;transform:scaleX(0.9185);transform-origin:0 0;">View Discussion</div>
<div class="t" style="left:2198.06px;top:1260.61px;font-size:34.78px;color:#7b6f5f;font-weight:700;transform:scaleX(0.9377);transform-origin:0 0;">Storage Capacity</div>
<div class="t" style="left:2134.00px;top:1358.37px;font-size:31.16px;color:#333;transform:scaleX(0.9185);transform-origin:0 0;">View Discussion</div>
<div class="t" style="left:2155.81px;top:1565.29px;font-size:32.83px;color:#0e5381;-webkit-text-stroke:1.15px #0e5381;transform:scaleX(1.0566);transform-origin:0 0;">Andrei</div>
<div class="t" style="left:2177.55px;top:1789.89px;font-size:32.83px;color:#0e5381;-webkit-text-stroke:1.15px #0e5381;transform:scaleX(0.9621);transform-origin:0 0;">Aya</div>
<div class="t" style="left:2287.00px;top:1437.35px;font-size:30.00px;color:#333;transform:scaleX(0.9780);transform-origin:0 0;">The next option is expanded storage</div>
<div class="t" style="left:2286.04px;top:1477.55px;font-size:30.00px;color:#333;transform:scaleX(0.9649);transform-origin:0 0;">capacity. This allows users to expand space</div>
<div class="t" style="left:2286.00px;top:1516.95px;font-size:30.00px;color:#333;">on their phone. Its neat in theory, but people</div>
<div class="t" style="left:2286.00px;top:1557.05px;font-size:30.00px;color:#333;transform:scaleX(0.9980);transform-origin:0 0;">don&#x27;t really need that sort of storage.</div>
<div class="t" style="left:2285.02px;top:1661.05px;font-size:30.00px;color:#333;transform:scaleX(0.9887);transform-origin:0 0;">It&#x27;s a winner in my forecasts. I think that</div>
<div class="t" style="left:2286.02px;top:1700.45px;font-size:30.00px;color:#333;transform:scaleX(0.9821);transform-origin:0 0;">consumers want this technology so they can</div>
<div class="t" style="left:2286.00px;top:1740.55px;font-size:30.00px;color:#333;transform:scaleX(0.9958);transform-origin:0 0;">easily back up information stored by their</div>
<div class="t" style="left:2285.98px;top:1780.35px;font-size:30.00px;color:#333;transform:scaleX(1.0212);transform-origin:0 0;">phone.</div>
<div class="t" style="left:2285.00px;top:1884.65px;font-size:30.00px;color:#333;">I don&#x27;t need to see the the future to tell me</div>
<div class="t" style="left:2287.00px;top:1924.85px;font-size:30.00px;color:#333;transform:scaleX(1.0039);transform-origin:0 0;">that signs point to no on this option.</div>

</body></html>
